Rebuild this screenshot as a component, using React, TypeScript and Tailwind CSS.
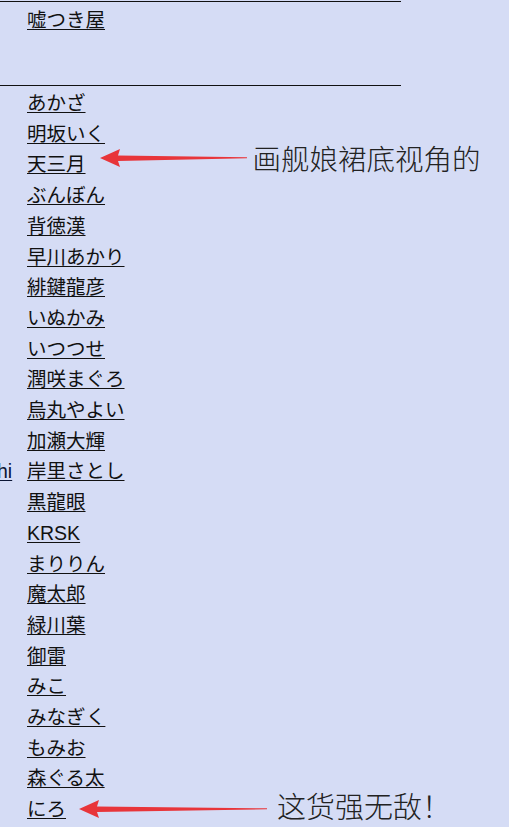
const names = [
  "あかざ",
  "明坂いく",
  "天三月",
  "ぶんぼん",
  "背徳漢",
  "早川あかり",
  "緋鍵龍彦",
  "いぬかみ",
  "いつつせ",
  "潤咲まぐろ",
  "烏丸やよい",
  "加瀬大輝",
  "岸里さとし",
  "黒龍眼",
  "KRSK",
  "まりりん",
  "魔太郎",
  "緑川葉",
  "御雷",
  "みこ",
  "みなぎく",
  "もみお",
  "森ぐる太",
  "にろ",
];

function Arrow({ width }: { width: number }) {
  // tapered red arrow pointing left
  return (
    <svg width={width} height="20" viewBox={`0 0 ${width} 20`} className="block">
      <path
        d={`M0 10 L20 1 L18 7.5 L${width} 9.3 L${width} 10.3 L18 13 L20 19 Z`}
        fill="#e8353a"
      />
    </svg>
  );
}

export default function App() {
  return (
    <div
      className="relative min-h-[827px] w-full bg-[#d5dcf5] text-[#111] overflow-hidden"
      style={{ fontFamily: '"Liberation Sans", "Noto Sans CJK JP", sans-serif' }}
    >
      <div className="w-[401px] pt-[1px]">
        <div className="border-t border-[#111]" />
        <div className="pl-[27px] h-[83px] pt-[3px] text-[19.5px] leading-[30.7px]">
          <a className="underline underline-offset-2">嘘つき屋</a>
        </div>
        <div className="border-t border-[#111]" />
      </div>

      <ul className="pt-[2px] text-[19.5px] leading-[30.7px]">
        {names.map((n, i) => (
          <li key={n} className="flex">
            <span className="w-[27px] shrink-0">
              {i === 12 && <a className="underline underline-offset-2 -ml-[3px] text-[#0b1533]">hi</a>}
            </span>
            <a className="underline underline-offset-2">{n}</a>
            {i === 2 && (
              <div className="flex items-center ml-[14px] -mt-[14px]">
                <Arrow width={147} />
                <span
                  className="ml-[6px] text-[28.5px] leading-[30px] text-[#222] font-light"
                  style={{ fontFamily: '"Noto Sans CJK SC", sans-serif' }}
                >
                  画舰娘裙底视角的
                </span>
              </div>
            )}
            {i === 23 && (
              <div className="flex items-center ml-[13px] h-[30px]">
                <Arrow width={188} />
                <span
                  className="ml-[10px] -mt-[8px] text-[29px] leading-[30px] text-[#222] font-light"
                  style={{ fontFamily: '"Noto Sans CJK SC", sans-serif' }}
                >
                  这货强无敌！
                </span>
              </div>
            )}
          </li>
        ))}
      </ul>
    </div>
  );
}
